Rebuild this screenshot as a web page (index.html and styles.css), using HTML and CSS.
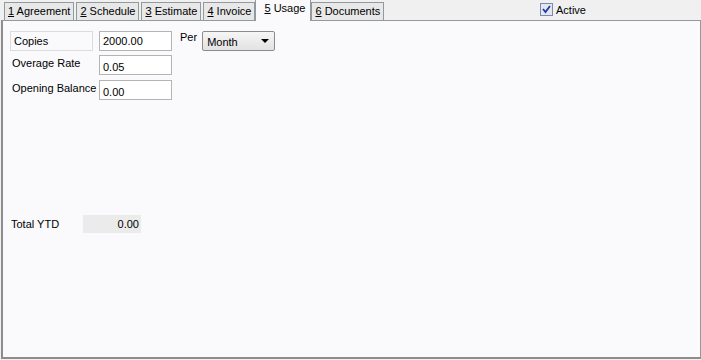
FILE: index.html
```html
<!DOCTYPE html>
<html>
<head>
  <link rel="stylesheet" href="styles.css">
  <title>Usage</title>
</head>
<body>
  <div class="window">
    <div class="tabbar">
      <div class="tabs">
        <div class="tab"><u>1</u> Agreement</div>
        <div class="tab"><u>2</u> Schedule</div>
        <div class="tab"><u>3</u> Estimate</div>
        <div class="tab"><u>4</u> Invoice</div>
        <div class="tab selected"><u>5</u> Usage</div>
        <div class="tab"><u>6</u> Documents</div>
      </div>
      <label class="active">
        <span class="check">
          <svg width="9" height="9" viewBox="0 0 9 9"><path d="M1 4 L3.5 7 L8 1" fill="none" stroke="#1c3c9c" stroke-width="1.8"/></svg>
        </span>
        Active
      </label>
    </div>
    <div class="panel">
      <div class="form">
        <div class="col">
          <div class="row">
            <div class="label boxed">Copies</div>
            <div class="field">2000.00</div>
          </div>
          <div class="row">
            <div class="label">Overage Rate</div>
            <div class="field low">0.05</div>
          </div>
          <div class="row">
            <div class="label">Opening Balance</div>
            <div class="field low">0.00</div>
          </div>
        </div>
        <div class="per">
          <span class="per-label">Per</span>
          <div class="select">Month <span class="arrow"></span></div>
        </div>
      </div>
      <div class="total">
        <span class="total-label">Total YTD</span>
        <span class="total-value">0.00</span>
      </div>
    </div>
  </div>
</body>
</html>
```
FILE: styles.css
```css
body {
  margin: 0;
  background: #f0f0f0;
  font-family: "Liberation Sans", Arial, sans-serif;
  font-size: 11px;
  color: #000;
}
.window {
  width: 701px;
  height: 360px;
  display: flex;
  flex-direction: column;
}
.tabbar {
  height: 20px;
  display: flex;
  align-items: flex-end;
}
.tabs {
  display: flex;
  padding-left: 4px;
  gap: 2px;
  align-items: flex-end;
}
.tab {
  height: 18px;
  line-height: 16px;
  padding: 0 3px;
  border: 1px solid #919b9c;
  border-bottom: none;
  background: #e8e8e8;
  white-space: nowrap;
  box-sizing: border-box;
}
.tab.selected {
  height: 22px;
  background: #fafafc;
  padding: 0 5px 3px 8px;
  margin: 0 -2px -1px;
  position: relative;
  z-index: 1;
}
.active {
  margin-left: auto;
  margin-right: 115px;
  align-self: flex-start;
  margin-top: 3px;
  display: flex;
  align-items: center;
  gap: 3px;
}
.check {
  width: 11px;
  height: 11px;
  border: 1px solid #7b8ab0;
  background: #e4e7ee;
  display: flex;
  align-items: center;
  justify-content: center;
}
.panel {
  flex: 1;
  margin: 0 0 1px 1px;
  border: 1px solid #919b9c;
  border-left: 2px solid #8c8c8c;
  border-bottom: 2px solid #8c8c8c;
  background: #fafafc;
}
.form {
  display: flex;
  padding: 10px 0 0 7px;
}
.col {
  display: flex;
  flex-direction: column;
  gap: 4px;
}
.row {
  display: flex;
  align-items: flex-start;
  height: 20px;
}
.row + .row {
  height: 21px;
}
.label {
  width: 89px;
  box-sizing: border-box;
  padding: 2px 0 0 2px;
}
.label.boxed {
  width: 83px;
  height: 20px;
  margin-right: 6px;
  border: 1px solid #dcdcdc;
  padding: 3px 0 0 3px;
}
.field {
  width: 73px;
  height: 20px;
  box-sizing: border-box;
  border: 1px solid #b4b4b4;
  background: #fff;
  padding: 3px 0 0 3px;
}
.field.low {
  padding-top: 5px;
}
.per {
  display: flex;
  align-items: flex-start;
  margin-left: 8px;
}
.per-label {
  margin-right: 5px;
}
.select {
  width: 73px;
  height: 20px;
  box-sizing: border-box;
  border: 1px solid #8c8c8c;
  border-radius: 2px;
  background: linear-gradient(#f6f6f6, #e2e2e2);
  padding: 4px 0 0 4px;
  display: flex;
}
.arrow {
  margin-left: auto;
  margin-right: 5px;
  margin-top: 3px;
  border-left: 4px solid transparent;
  border-right: 4px solid transparent;
  border-top: 4px solid #000;
  width: 0;
  height: 0;
}
.total {
  display: flex;
  align-items: center;
  margin: 114px 0 0 8px;
}
.total-label {
  width: 72px;
}
.total-value {
  width: 58px;
  height: 18px;
  line-height: 18px;
  background: #ebebeb;
  text-align: right;
  padding-right: 2px;
  box-sizing: border-box;
}
```
